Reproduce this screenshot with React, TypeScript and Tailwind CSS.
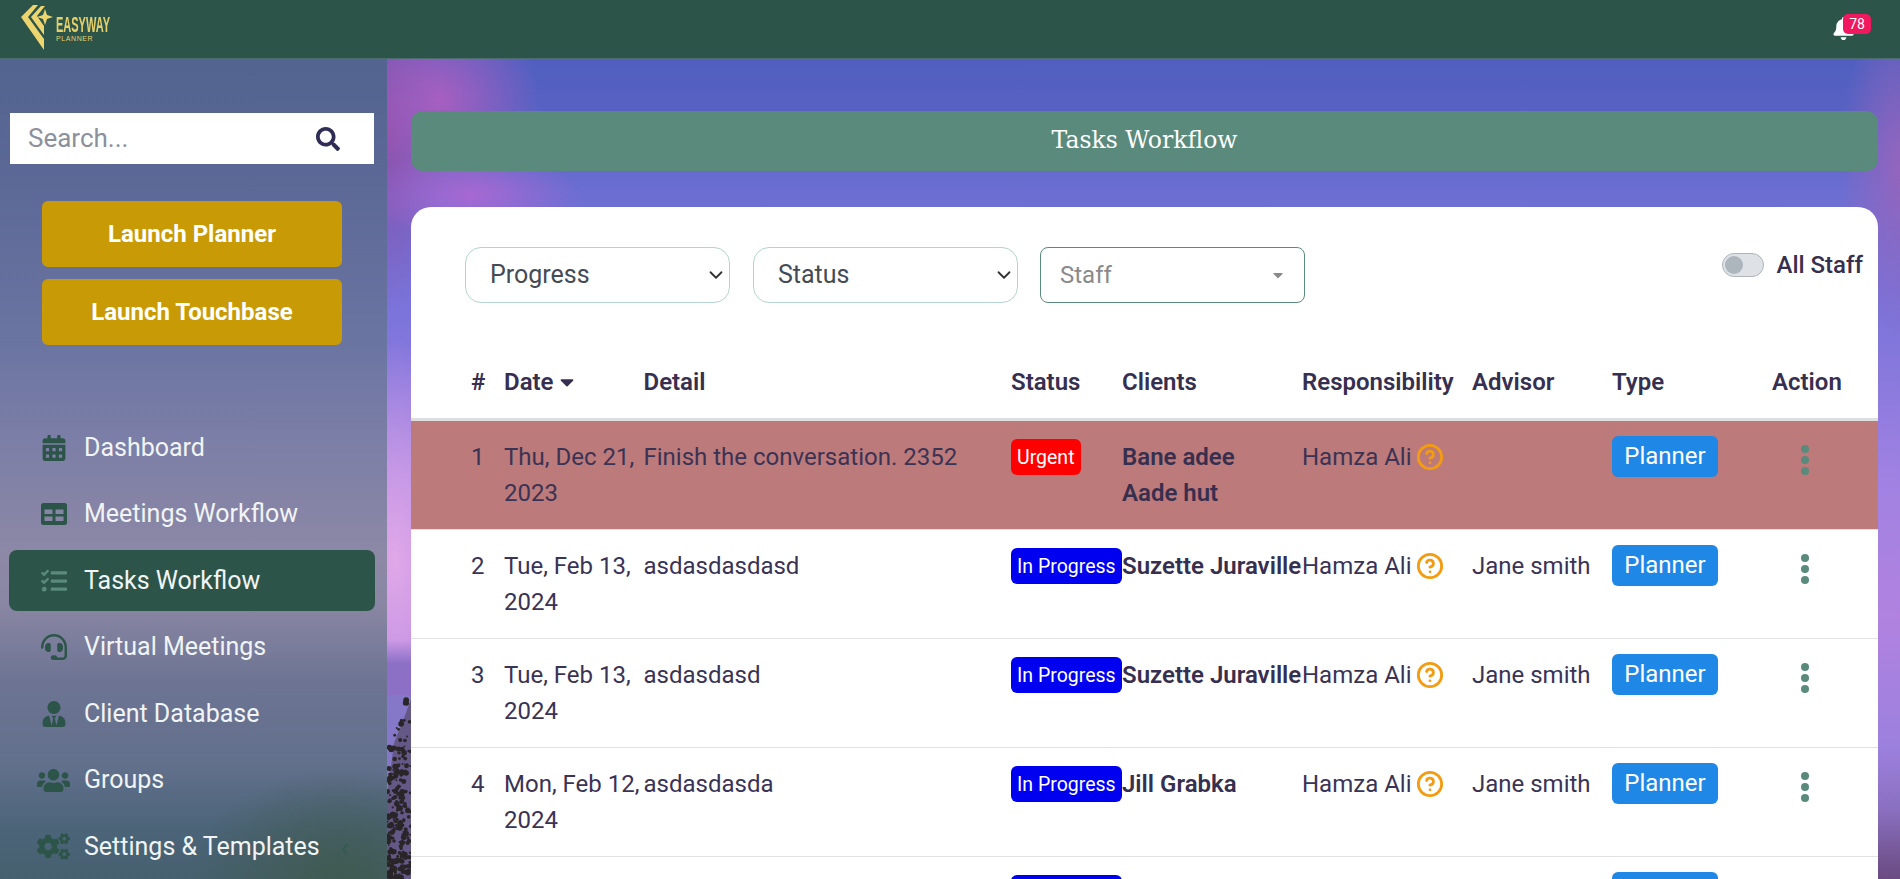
import { ChevronDown, ChevronLeft, CircleHelp } from "lucide-react";
import {
  FaBell,
  FaCalendarAlt,
  FaCaretDown,
  FaCogs,
  FaHeadset,
  FaSearch,
  FaTasks,
  FaUserTie,
  FaUsers,
} from "react-icons/fa";

function MeetingsIcon({ size, className }: { size: number; className?: string }) {
  return (
    <svg width={size} height={size} viewBox="0 0 26 26" className={className}>
      <path
        fill="currentColor"
        fillRule="evenodd"
        d="M2.5 2h21A2.5 2.5 0 0 1 26 4.5v17a2.5 2.5 0 0 1-2.5 2.5h-21A2.5 2.5 0 0 1 0 21.5v-17A2.5 2.5 0 0 1 2.5 2zM3.500 8.500v4.500h8v-4.500zM14.500 8.500v4.500h8v-4.500zM3.500 15.500v4.500h8v-4.500zM14.500 15.500v4.500h8v-4.500z"
      />
    </svg>
  );
}

const NAV = [
  { label: "Dashboard", icon: FaCalendarAlt, size: 26 },
  { label: "Meetings Workflow", icon: MeetingsIcon, size: 26 },
  { label: "Tasks Workflow", icon: FaTasks, size: 26, active: true },
  { label: "Virtual Meetings", icon: FaHeadset, size: 26 },
  { label: "Client Database", icon: FaUserTie, size: 26 },
  { label: "Groups", icon: FaUsers, size: 33 },
  { label: "Settings & Templates", icon: FaCogs, size: 33 },
];

const ROWS = [
  { n: 1, date: "Thu, Dec 21, 2023", detail: "Finish the conversation. 2352", status: "Urgent", clients: ["Bane adee", "Aade hut"], advisor: "" },
  { n: 2, date: "Tue, Feb 13, 2024", detail: "asdasdasdasd", status: "In Progress", clients: ["Suzette Juraville"], advisor: "Jane smith" },
  { n: 3, date: "Tue, Feb 13, 2024", detail: "asdasdasd", status: "In Progress", clients: ["Suzette Juraville"], advisor: "Jane smith" },
  { n: 4, date: "Mon, Feb 12, 2024", detail: "asdasdasda", status: "In Progress", clients: ["Jill Grabka"], advisor: "Jane smith" },
  { n: 5, date: "Mon, Feb 12, 2024", detail: "asdasdasd", status: "In Progress", clients: ["Jill Grabka"], advisor: "Jane smith" },
];

const noise = (n: number) => {
  const v = Math.sin(n * 12.9898) * 43758.5453;
  return v - Math.floor(v);
};

// leaves of the tree in the photo: scattered specks, denser towards the bottom
const TREE = Array.from({ length: 230 }, (_, i) => {
  const y = 2 + Math.sqrt(noise(i + 1)) * 182;
  const spread = Math.min(24, 5 + y / 3);
  return { id: i, x: 24 - noise(i + 300) * spread, y, r: 0.8 + noise(i + 600) * 2.2 };
});

function Logo() {
  return (
    <div className="flex items-center pl-[21px]">
      <svg width="32" height="46" viewBox="0 0 32 46" className="mb-[4px]">
        <g fill="#ecd56f">
          <polygon points="0,13 12,1 17,1 7,13 23,35 23,46" />
          <polygon points="10,13 20,2 24,2 16,12 23,22 23,31" />
          <polygon points="24,5 26,11 32,13 26,15 24,21 22,15 16,13 22,11" />
        </g>
      </svg>
      <div className="ml-[3px] flex w-[55px] flex-col font-['Liberation_Sans',sans-serif] text-[#e6d06c]">
        <span className="origin-left scale-x-[0.5] whitespace-nowrap text-[22px] leading-[20px] font-bold">EASYWAY</span>
        <span className="whitespace-nowrap text-[7px] leading-[8px] tracking-[0.6px]">PLANNER</span>
      </div>
    </div>
  );
}

function Background() {
  return (
    <div className="absolute inset-0 bg-[linear-gradient(180deg,#4f5fbf_6%,#5a62c4_14%,#6c6ed2_22%,#7c74da_36%,#a182e2_55%,#b182e0_70%,#9c80de_85%,#8a70c0_92%,#6a4a80_100%)]">
      <div className="absolute inset-0 bg-[radial-gradient(ellipse_100px_100px_at_440px_100px,#a85fc0,transparent),radial-gradient(ellipse_110px_45px_at_470px_195px,#a868d2,transparent),radial-gradient(ellipse_60px_180px_at_390px_130px,#8a50a8,transparent),radial-gradient(ellipse_60px_170px_at_1900px_170px,#9465bd,transparent),radial-gradient(ellipse_90px_220px_at_395px_560px,#e0a8e8,transparent)]" />
      <div className="absolute top-[640px] left-[387px] h-[60px] w-[24px] bg-[linear-gradient(180deg,transparent,#8b70c6_40%)]" />
      <svg width="24" height="184" viewBox="0 0 24 184" className="absolute top-[695px] left-[387px] blur-[0.5px]">
        <rect width="24" height="184" fill="#8678c8" />
        <path d="M24 4 L16 26 L7 48 L3 80 L0 100 L0 184 L24 184 Z" fill="#3a3036" opacity="0.45" />
        {TREE.map((t) => (
          <circle key={t.id} cx={t.x} cy={t.y} r={t.r} fill="#2a2528" />
        ))}
      </svg>
    </div>
  );
}

function Sidebar() {
  return (
    <aside className="flex w-[387px] shrink-0 flex-col bg-[radial-gradient(ellipse_150px_110px_at_340px_820px,#3f5a50,transparent),linear-gradient(180deg,#52648f_0%,#5c6896_15%,#6b75a2_35%,#7b7ea6_46%,#8c88a6_60%,#8a87a4_66%,#6d7493_76%,#62708c_86%,#4b6478_94%,#46606f_100%)] pt-[54px]">
      <div className="ml-[10px] flex h-[51px] w-[364px] items-center justify-between bg-white pr-[34px] pl-[18px]">
        <span className="text-[26px] text-[#8b909c]">Search...</span>
        <FaSearch size={24} className="text-[#2f2c55]" />
      </div>
      <div className="mt-[37px] flex flex-col gap-[12px] pl-[42px]">
        {["Launch Planner", "Launch Touchbase"].map((label) => (
          <button key={label} className="h-[66px] w-[300px] rounded-[6px] bg-[#c89b06] text-[24px] font-bold text-white">
            {label}
          </button>
        ))}
      </div>
      <nav className="mt-[72px] flex flex-col gap-[5.5px] px-[9px]">
        {NAV.map((item) => {
          const Icon = item.icon;
          return (
            <div
              key={item.label}
              className={`relative flex h-[61px] w-[366px] items-center rounded-[8px] pl-[28px] ${item.active ? "bg-[#2c5449]" : ""}`}
            >
              <span className="flex w-[33px] justify-center">
                <Icon size={item.size} className={item.active ? "text-[#5a8a7c]" : "text-[#2c5449]"} />
              </span>
              <span className="ml-[14px] text-[25px] text-[#f1f4f4]">{item.label}</span>
              {item.label === "Settings & Templates" && (
                <ChevronLeft size={18} className="absolute top-[24px] left-[327px] text-[#2f5c4e]" />
              )}
            </div>
          );
        })}
      </nav>
    </aside>
  );
}

function Filters() {
  return (
    <div className="flex items-start justify-between pt-[40px] pr-[15px] pl-[54px]">
      <div className="flex gap-[23px]">
        {["Progress", "Status"].map((label) => (
          <div key={label} className="relative">
            <select className="h-[56px] w-[265px] appearance-none rounded-[16px] border border-[#b5d5cc] bg-white pl-[24px] text-[25px] text-[#444b55]">
              <option>{label}</option>
            </select>
            <ChevronDown size={22} className="pointer-events-none absolute top-[17px] right-[3px] text-[#333333]" />
          </div>
        ))}
        <div className="ml-[-1px] flex h-[56px] w-[265px] items-center justify-between rounded-[8px] border border-[#5a8a7c] pr-[18px] pl-[19px] text-[24px] text-[#8a8a8a]">
          Staff
          <FaCaretDown size={16} className="text-[#8a8a8a]" />
        </div>
      </div>
      <div className="flex items-center gap-[12px]">
        <div className="flex h-[24px] w-[42px] items-center rounded-full border border-[#adb5bd] bg-[#dee2e6] pl-[2px]">
          <div className="size-[18px] rounded-full bg-[#adb5bd]" />
        </div>
        <span className="text-[24px] font-medium text-[#372f4f]">All Staff</span>
      </div>
    </div>
  );
}

function TaskTable() {
  const th = "h-[116px] border-b-[3px] border-[#dedede] pt-[44px] text-left align-middle font-semibold";
  return (
    <table className="w-full table-fixed border-collapse text-[24px] leading-[36px] text-[#3a3355]">
      <colgroup>
        <col className="w-[93px]" />
        <col className="w-[139.500px]" />
        <col className="w-[367.500px]" />
        <col className="w-[111px]" />
        <col className="w-[180px]" />
        <col className="w-[170px]" />
        <col className="w-[140px]" />
        <col className="w-[142px]" />
        <col />
      </colgroup>
      <thead className="text-[#372f4f]">
        <tr>
          <th className={`${th} pl-[60px]`}>#</th>
          <th className={th}>
            <span className="flex items-center gap-[2px]">
              Date <FaCaretDown size={22} />
            </span>
          </th>
          <th className={th}>Detail</th>
          <th className={th}>Status</th>
          <th className={th}>Clients</th>
          <th className={th}>Responsibility</th>
          <th className={th}>Advisor</th>
          <th className={th}>Type</th>
          <th className={`${th} pl-[18px]`}>Action</th>
        </tr>
      </thead>
      <tbody>
        {ROWS.map((row) => (
          <tr key={row.n} className={`h-[109px] border-b border-[#e2e2e2] align-top ${row.n === 1 ? "bg-[#bd7a7a]" : ""}`}>
            <td className="pt-[18px] pl-[60px]">{row.n}</td>
            <td className="pt-[18px] pb-[18px]">{row.date}</td>
            <td className="pt-[18px]">{row.detail}</td>
            <td className="pt-[18px]">
              <span
                className={`inline-flex h-[36px] items-center rounded-[6px] px-[6px] pt-[2px] align-top text-[19.500px] whitespace-nowrap text-white ${row.status === "Urgent" ? "bg-[#ff0000]" : "bg-[#0000f0]"}`}
              >
                {row.status}
              </span>
            </td>
            <td className="pt-[18px] font-semibold whitespace-nowrap text-[#372f4f]">
              {row.clients.map((c) => (
                <div key={c}>{c}</div>
              ))}
            </td>
            <td className="pt-[18px] whitespace-nowrap">
              <span className="flex items-center gap-[5px]">
                Hamza Ali
                <CircleHelp size={28} strokeWidth={2.4} className="text-[#f39c12]" />
              </span>
            </td>
            <td className="pt-[18px]">{row.advisor}</td>
            <td className="pt-[15px]">
              <span className="inline-flex h-[41px] w-[106px] items-center justify-center rounded-[6px] bg-[#1f87e5] text-white">
                Planner
              </span>
            </td>
            <td className="pt-[24px] pl-[47px]">
              <span className="flex w-[8px] flex-col gap-[3px]">
                <i className="size-[8px] rounded-full bg-[#5a8a7c]" />
                <i className="size-[8px] rounded-full bg-[#5a8a7c]" />
                <i className="size-[8px] rounded-full bg-[#5a8a7c]" />
              </span>
            </td>
          </tr>
        ))}
      </tbody>
    </table>
  );
}

export default function App() {
  return (
    <div className="relative flex h-screen flex-col overflow-hidden font-['Roboto',sans-serif]">
      <Background />
      <header className="relative flex h-[59px] shrink-0 items-center justify-between border-b border-[#4d6c70] bg-[#2c5449]">
        <Logo />
        <div className="relative mr-[48px] h-[24px] w-[20px]">
          <FaBell size={23} className="text-white" />
          <span className="absolute top-[-3px] left-[11px] flex h-[20px] w-[28px] items-center justify-center rounded-[5px] bg-[#f0195f] text-[14px] text-white">
            78
          </span>
        </div>
      </header>
      <div className="relative flex min-h-0 flex-1">
        <Sidebar />
        <main className="min-w-0 flex-1 pt-[52px] pr-[22px] pl-[24px]">
          <div className="flex h-[60px] items-center justify-center rounded-[12px] bg-[#5a8a7c] font-['DejaVu_Serif',serif] text-[23.500px] text-white">
            Tasks Workflow
          </div>
          <section className="mt-[36px] rounded-t-[20px] bg-white">
            <Filters />
            <TaskTable />
          </section>
        </main>
      </div>
    </div>
  );
}
